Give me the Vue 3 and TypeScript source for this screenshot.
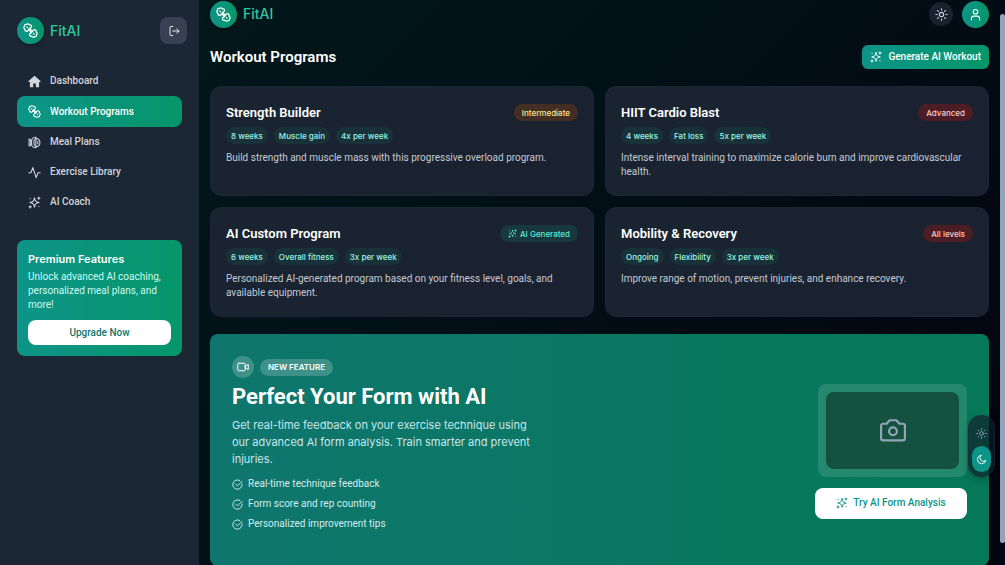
<script setup lang="ts">
import { ref } from 'vue'

type Tone = 'amber' | 'red' | 'teal'

interface Program {
  title: string
  badge: string
  tone: Tone
  tags: string[]
  text: string
}

const navItems = [
  { id: 'home', label: 'Dashboard' },
  { id: 'dumbbell', label: 'Workout Programs' },
  { id: 'meal', label: 'Meal Plans' },
  { id: 'activity', label: 'Exercise Library' },
  { id: 'sparkles', label: 'AI Coach' },
]

const programs: Program[] = [
  {
    title: 'Strength Builder',
    badge: 'Intermediate',
    tone: 'amber',
    tags: ['8 weeks', 'Muscle gain', '4x per week'],
    text: 'Build strength and muscle mass with this progressive overload program.',
  },
  {
    title: 'HIIT Cardio Blast',
    badge: 'Advanced',
    tone: 'red',
    tags: ['4 weeks', 'Fat loss', '5x per week'],
    text: 'Intense interval training to maximize calorie burn and improve cardiovascular health.',
  },
  {
    title: 'AI Custom Program',
    badge: 'AI Generated',
    tone: 'teal',
    tags: ['6 weeks', 'Overall fitness', '3x per week'],
    text: 'Personalized AI-generated program based on your fitness level, goals, and available equipment.',
  },
  {
    title: 'Mobility & Recovery',
    badge: 'All levels',
    tone: 'red',
    tags: ['Ongoing', 'Flexibility', '3x per week'],
    text: 'Improve range of motion, prevent injuries, and enhance recovery.',
  },
]

const features = ['Real-time technique feedback', 'Form score and rep counting', 'Personalized improvement tips']

const active = ref('dumbbell')
const theme = ref<'light' | 'dark'>('dark')
</script>

<template>
  <svg class="defs" aria-hidden="true">
    <symbol id="i-home" viewBox="0 0 24 24">
      <path fill="currentColor" stroke="none" d="M12 1.200 1 11.200c-.6.600-.2 1.500.600 1.500H3.500v8.300c0 1 .7 1.700 1.700 1.700h4.300v-6c0-.6.4-1 1-1h3c.6 0 1 .4 1 1v6h4.300c1 0 1.700-.7 1.700-1.700v-8.300h1.900c.8 0 1.200-.9.600-1.500z" />
    </symbol>
    <symbol id="i-dumbbell" viewBox="0 0 24 24">
      <path d="M6 13.500C3.500 13.500 2.500 11.500 3.200 9.800 1 9 .8 6.200 2.500 5.200 1.800 3 3.800 1.500 5.600 2.300 6.800.7 9.500 1 10 3c2-.6 4 .6 3.700 2.800C13.500 7.500 11 8.500 9.700 9.700S8 13.500 6 13.500Z" />
      <path d="M18 10.500c2.500 0 3.500 2 2.800 3.700 2.200.8 2.400 3.600.7 4.600.7 2.200-1.300 3.700-3.100 2.900-1.200 1.600-3.900 1.300-4.400-.7-2 .6-4-.6-3.700-2.800.2-1.700 2.700-2.700 4-3.900s1.700-3.800 3.700-3.800Z" />
      <path d="m10.500 8.800 4.700 4.700M8.800 10.500l4.700 4.700M6.200 6.200l1 1M16.800 16.800l1 1" />
    </symbol>
    <symbol id="i-meal" viewBox="0 0 24 24">
      <path d="M14.500 4c4.500.5 7.500 3.500 7.500 8s-3 7.500-7.500 8c-2.600-2.200-3.800-4.800-3.800-8s1.200-5.800 3.800-8Z" />
      <path d="M14.500 4v16M7.800 5C6.800 7 6.500 9.400 6.500 12s.3 5 1.300 7M7.800 5c1.800-2.500 4.500-3 7-2.500M7.800 19c1.800 2.500 4.500 3 7 2.500M2 5.500v13l3-2v-9zM18 9.500v5" />
    </symbol>
    <symbol id="i-activity" viewBox="0 0 24 24">
      <path d="M1.500 12.500h3.800L9 3l6 18.500 3.500-9H22.500" />
    </symbol>
    <symbol id="i-sparkles" viewBox="0 0 24 24">
      <path d="M12 3.500c1 6 2.500 7.500 8.500 8.500-6 1-7.500 2.500-8.500 8.500-1-6-2.500-7.500-8.500-8.500 6-1 7.500-2.500 8.500-8.500Z" />
      <path d="M20 2v4M18 4h4M4 18v4M2 20h4M20 19v.5M4 4.500V5" />
    </symbol>
    <symbol id="i-logout" viewBox="0 0 24 24">
      <path d="M9.500 3H5.700C4.600 3 4 3.700 4 4.700v14.600c0 1 .6 1.700 1.700 1.700h3.800M9.500 12H22M17.500 7.500 22 12l-4.500 4.500" />
    </symbol>
    <symbol id="i-sun" viewBox="0 0 24 24">
      <circle cx="12" cy="12" r="4" />
      <path d="M12 1.500v2.300M12 20.200v2.300M1.500 12h2.300M20.200 12h2.300M4.600 4.600l1.600 1.600M17.800 17.800l1.600 1.600M4.600 19.400l1.600-1.600M17.800 6.200l1.600-1.600" />
    </symbol>
    <symbol id="i-moon" viewBox="0 0 24 24">
      <path d="M10.500 3A9.200 9.200 0 1 0 21.500 13.500 6.500 6.500 0 1 1 10.500 3Z" />
    </symbol>
    <symbol id="i-user" viewBox="0 0 24 24">
      <circle cx="12" cy="7" r="4.200" />
      <path d="M4.500 22v-2.500A4.500 4.500 0 0 1 9 15h6a4.500 4.500 0 0 1 4.500 4.500V22" />
    </symbol>
    <symbol id="i-video" viewBox="0 0 24 24">
      <rect x="1.500" y="4.500" width="15" height="15" rx="2" />
      <path d="m16.500 10.500 6-3.500v10l-6-3.500z" />
    </symbol>
    <symbol id="i-check" viewBox="0 0 24 24">
      <path d="M22 10.500A10.200 10.200 0 1 1 17 3.200" />
      <path d="m8 11 4 4L22 5" />
    </symbol>
    <symbol id="i-camera" viewBox="0 0 24 24">
      <path d="M8.800 3h6.400l2.600 3.200H21a2 2 0 0 1 2 2V19.500a2 2 0 0 1-2 2H3a2 2 0 0 1-2-2V8.200a2 2 0 0 1 2-2h3.200z" />
      <circle cx="12" cy="13.200" r="3.600" />
    </symbol>
  </svg>

  <div class="app">
    <aside class="sidebar">
      <div class="side-head">
        <a href="#" class="brand">
          <span class="logo"><svg class="icon"><use href="#i-dumbbell" /></svg></span>
          <span>FitAI</span>
        </a>
        <button class="logout" aria-label="Log out"><svg class="icon"><use href="#i-logout" /></svg></button>
      </div>
      <nav class="nav" aria-label="Main">
        <a
          v-for="item in navItems"
          :key="item.id"
          href="#"
          class="nav-item"
          :class="{ active: active === item.id }"
          @click.prevent="active = item.id"
        >
          <svg class="icon"><use :href="'#i-' + item.id" /></svg>
          <span>{{ item.label }}</span>
        </a>
      </nav>
      <section class="premium">
        <h2>Premium Features</h2>
        <p>Unlock advanced AI coaching, personalized meal plans, and more!</p>
        <button>Upgrade Now</button>
      </section>
    </aside>

    <main class="main">
      <header class="topbar">
        <a href="#" class="brand">
          <span class="logo"><svg class="icon"><use href="#i-dumbbell" /></svg></span>
          <span>FitAI</span>
        </a>
        <div class="actions">
          <button class="round" aria-label="Toggle theme"><svg class="icon"><use href="#i-sun" /></svg></button>
          <button class="round profile" aria-label="Profile"><svg class="icon"><use href="#i-user" /></svg></button>
        </div>
      </header>

      <div class="title-row">
        <h1>Workout Programs</h1>
        <button class="generate"><svg class="icon"><use href="#i-sparkles" /></svg>Generate AI Workout</button>
      </div>

      <div class="grid">
        <article v-for="p in programs" :key="p.title" class="card">
          <div class="card-head">
            <h3>{{ p.title }}</h3>
            <span class="badge" :class="p.tone">
              <svg v-if="p.tone === 'teal'" class="icon"><use href="#i-sparkles" /></svg>{{ p.badge }}
            </span>
          </div>
          <ul class="tags">
            <li v-for="t in p.tags" :key="t">{{ t }}</li>
          </ul>
          <p>{{ p.text }}</p>
        </article>
      </div>

      <section class="banner">
        <div class="pitch">
          <div class="eyebrow">
            <span class="cam"><svg class="icon"><use href="#i-video" /></svg></span>
            <span class="pill">NEW FEATURE</span>
          </div>
          <h2>Perfect Your Form with AI</h2>
          <p>Get real-time feedback on your exercise technique using our advanced AI form analysis. Train smarter and prevent injuries.</p>
          <ul>
            <li v-for="f in features" :key="f"><svg class="icon"><use href="#i-check" /></svg>{{ f }}</li>
          </ul>
        </div>
        <div class="preview">
          <div class="frame"><div class="screen"><svg class="icon"><use href="#i-camera" /></svg></div></div>
          <button><svg class="icon"><use href="#i-sparkles" /></svg>Try AI Form Analysis</button>
        </div>
      </section>
    </main>

    <div class="switcher">
      <button :class="{ on: theme === 'light' }" aria-label="Light theme" @click="theme = 'light'"><svg class="icon"><use href="#i-sun" /></svg></button>
      <button :class="{ on: theme === 'dark' }" aria-label="Dark theme" @click="theme = 'dark'"><svg class="icon"><use href="#i-moon" /></svg></button>
    </div>
    <div class="scroll-track" aria-hidden="true"><div class="scroll-thumb"></div></div>
  </div>
</template>

<style>
body {
  background: #020617;
  overflow: hidden;
}
</style>

<style scoped>
* {
  box-sizing: border-box;
  margin: 0;
  padding: 0;
}
.defs {
  position: absolute;
  width: 0;
  height: 0;
}
.app {
  display: flex;
  height: 100vh;
  overflow: hidden;
  background: linear-gradient(135deg, #021b1d 0%, #020f16 50%, #01030f 100%);
  color: #fff;
  font-family: Roboto, Inter, sans-serif;
  font-size: 10px;
  line-height: 14px;
}
button {
  border: 0;
  font: inherit;
  font-weight: 500;
  color: inherit;
  cursor: pointer;
}
a {
  color: inherit;
  text-decoration: none;
}
ul {
  list-style: none;
}
.icon {
  width: 12px;
  height: 12px;
  flex: none;
  fill: none;
  stroke: currentColor;
  stroke-width: 2;
  stroke-linecap: round;
  stroke-linejoin: round;
}

.sidebar {
  flex: none;
  width: 199px;
  padding: 17px 12px 17px 17px;
  background: #1c2735;
}
.side-head {
  display: flex;
  justify-content: space-between;
  align-items: center;
}
.brand {
  display: flex;
  align-items: center;
  gap: 6px;
  color: #2fc9a0;
  font: 500 14px/18px Inter, sans-serif;
}
.logo {
  display: grid;
  place-items: center;
  width: 27px;
  height: 27px;
  border-radius: 50%;
  color: #fff;
  background: linear-gradient(90deg, #0d9488, #059669);
  box-shadow: 0 2px 4px rgba(0, 0, 0, 0.25);
}
.logo .icon {
  width: 15px;
  height: 15px;
}
.logout {
  display: grid;
  place-items: center;
  width: 27px;
  height: 27px;
  border-radius: 8px;
  background: #374151;
  color: #e5e7eb;
}
.nav {
  display: flex;
  flex-direction: column;
  margin: 22px 5px 0 0;
}
.nav-item {
  display: flex;
  align-items: center;
  gap: 9px;
  padding: 8px 11px;
  border-radius: 8px;
  color: #d1d5db;
  font-weight: 500;
}
.nav-item .icon {
  width: 13px;
  height: 13px;
}
.nav-item.active {
  min-height: 31px;
  color: #fff;
  background: linear-gradient(90deg, #0d9488, #059669);
}
.premium {
  margin: 23px 5px 0 0;
  padding: 12px 11px 11px;
  border-radius: 8px;
  background: linear-gradient(90deg, #0d9488, #059669);
}
.premium h2 {
  font: 600 11px/14px Inter, sans-serif;
}
.premium p {
  margin: 4px 0 8px;
  color: #ccfbf1;
}
.premium button {
  width: 100%;
  height: 25px;
  border-radius: 8px;
  background: #fff;
  color: #0f766e;
}

.main {
  flex: 1;
  min-width: 0;
  padding: 0 16px 0 11px;
}
.topbar {
  display: flex;
  justify-content: space-between;
  align-items: center;
  height: 28px;
}
.actions {
  display: flex;
  align-items: center;
  gap: 9px;
}
.round {
  display: grid;
  place-items: center;
  width: 24px;
  height: 24px;
  border-radius: 50%;
  background: #1a2230;
  color: #d1d5db;
}
.round .icon {
  width: 13px;
  height: 13px;
}
.profile {
  width: 27px;
  height: 27px;
  color: #fff;
  background: linear-gradient(90deg, #0d9488, #059669);
}
.title-row {
  display: flex;
  justify-content: space-between;
  align-items: center;
  margin: 17px 0;
}
h1 {
  font-size: 15px;
  font-weight: 600;
  line-height: 24px;
}
.generate {
  display: flex;
  align-items: center;
  gap: 6px;
  height: 24px;
  padding: 0 8px;
  border-radius: 6px;
  background: linear-gradient(90deg, #0d9488, #059669);
}
.grid {
  display: grid;
  grid-template-columns: 1fr 1fr;
  gap: 11px;
}
.card {
  min-height: 110px;
  padding: 17px 15px 14px;
  border: 1px solid #1b2735;
  border-radius: 11px;
  background: linear-gradient(135deg, #1a2431, #1a2130);
}
.card-head {
  display: flex;
  justify-content: space-between;
  align-items: center;
}
.card h3 {
  font-size: 13px;
  font-weight: 600;
  line-height: 17px;
}
.badge,
.tags li {
  display: flex;
  align-items: center;
  gap: 3px;
  height: 17px;
  border-radius: 9px;
  font-family: Inter, sans-serif;
  font-size: 8px;
  font-weight: 500;
}
.badge {
  padding: 0 8px;
}
.badge .icon {
  width: 9px;
  height: 9px;
}
.amber {
  background: #442e24;
  color: #fde68a;
}
.red {
  background: #4c1d25;
  color: #fecaca;
}
.teal {
  background: #17383d;
  color: #5eead4;
}
.tags {
  display: flex;
  gap: 6px;
  margin: 6px 0 7px;
}
.tags li {
  padding: 0 5px;
  background: #19323a;
  color: #99f6e4;
}
.card p {
  color: #c5cad2;
}

.banner {
  display: flex;
  justify-content: space-between;
  align-items: center;
  margin-top: 17px;
  padding: 22px 22px 35px;
  border-radius: 8px;
  background: linear-gradient(90deg, #0f766e, #047857);
}
.eyebrow {
  display: flex;
  align-items: center;
  gap: 6px;
}
.cam {
  display: grid;
  place-items: center;
  width: 22px;
  height: 22px;
  border-radius: 50%;
  background: rgba(255, 255, 255, 0.2);
}
.pill {
  height: 17px;
  padding: 0 8px;
  border-radius: 9px;
  background: rgba(255, 255, 255, 0.2);
  font: 600 8px/17px Inter, sans-serif;
}
.pitch {
  max-width: 304px;
}
.pitch h2 {
  margin: 5px 0 7px;
  font-size: 22px;
  font-weight: 700;
  line-height: 27px;
}
.pitch p {
  color: #cbe6ec;
  font: 400 11px/17px Inter, sans-serif;
}
.pitch ul {
  display: grid;
  gap: 6px;
  margin-top: 9px;
}
.pitch li {
  display: flex;
  align-items: center;
  gap: 5px;
  color: #d5ecef;
}
.pitch li .icon {
  width: 11px;
  height: 11px;
}
.preview {
  display: flex;
  flex-direction: column;
  align-items: flex-end;
  gap: 11px;
  margin-top: 15px;
}
.frame {
  padding: 8px;
  border-radius: 8px;
  background: rgba(255, 255, 255, 0.12);
}
.screen {
  display: grid;
  place-items: center;
  width: 133px;
  height: 77px;
  border-radius: 8px;
  background: #14523f;
  color: #94a3b8;
}
.screen .icon {
  width: 26px;
  height: 26px;
}
.preview button {
  display: flex;
  align-items: center;
  justify-content: center;
  gap: 5px;
  width: 152px;
  height: 31px;
  border-radius: 8px;
  background: #fff;
  color: #0d9488;
}

.switcher {
  position: fixed;
  right: 10px;
  top: 415px;
  display: flex;
  flex-direction: column;
  padding: 4px 3px;
  border: 1px solid rgba(30, 41, 59, 0.7);
  border-radius: 14px;
  background: rgba(15, 28, 42, 0.65);
  box-shadow: 0 3px 6px rgba(0, 0, 0, 0.25);
}
.switcher button {
  display: grid;
  place-items: center;
  width: 19px;
  height: 26px;
  border-radius: 10px;
  background: transparent;
  color: #94a3b8;
}
.switcher button.on {
  background: #0d9488;
  color: #fff;
}
.switcher .icon {
  width: 11px;
  height: 11px;
}
.scroll-track {
  position: fixed;
  top: 0;
  right: 0;
  width: 5px;
  height: 100vh;
  padding-top: 14px;
  background: #020617;
}
.scroll-thumb {
  height: 96%;
  border-radius: 3px;
  background: #94a3b8;
}
</style>
